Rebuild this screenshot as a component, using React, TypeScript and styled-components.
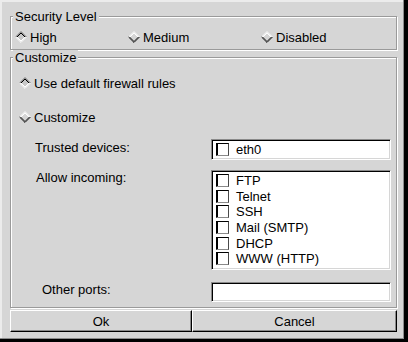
import React from "react";
import styled, { createGlobalStyle } from "styled-components";

const GlobalStyle = createGlobalStyle`
  html, body {
    margin: 0;
    padding: 0;
    background: #d6d6d6;
  }
  body {
    font-family: "Liberation Sans", Arial, sans-serif;
    font-size: 13px;
    color: #000;
  }
  * {
    box-sizing: border-box;
  }
`;

// GTK1 style diamond radio indicator
const Diamond: React.FC<{ checked?: boolean }> = ({ checked }) => {
  const outerTop = checked ? "#6a6a6a" : "#fff";
  const innerTop = checked ? "#000" : "#fff";
  const outerBottom = checked ? "#fff" : "#000";
  const innerBottom = checked ? "#fff" : "#7a7a7a";
  return (
    <svg width="12" height="12" viewBox="0 0 12 12">
      <polygon points="6,1 11,6 6,11 1,6" fill={checked ? "#c8c8c8" : "#d6d6d6"} />
      <polyline points="0.6,6 6,0.6 11.4,6" fill="none" stroke={outerTop} strokeWidth="1" />
      <polyline points="2,6 6,2 10,6" fill="none" stroke={innerTop} strokeWidth="1" />
      <polyline points="0.6,6 6,11.4 11.4,6" fill="none" stroke={outerBottom} strokeWidth="1" />
      <polyline points="2,6 6,10 10,6" fill="none" stroke={innerBottom} strokeWidth="1" />
    </svg>
  );
};

const Radio: React.FC<{ label: string; checked?: boolean }> = ({ label, checked }) => (
  <RadioRow>
    <Diamond checked={checked} />
    <span>{label}</span>
  </RadioRow>
);

const Check: React.FC<{ label: string }> = ({ label }) => (
  <CheckRow>
    <CheckBox />
    <span>{label}</span>
  </CheckRow>
);

const services = ["FTP", "Telnet", "SSH", "Mail (SMTP)", "DHCP", "WWW (HTTP)"];

export default function App() {
  return (
    <>
      <GlobalStyle />
      <Window>
        <Frame>
          <Legend>Security Level</Legend>
          <LevelRow>
            <Radio label="High" checked />
            <Radio label="Medium" />
            <Radio label="Disabled" />
          </LevelRow>
        </Frame>

        <Frame>
          <Legend>Customize</Legend>
          <CustomBody>
            <Radio label="Use default firewall rules" checked />
            <Spaced $top={18}>
              <Radio label="Customize" />
            </Spaced>
            <FormGrid>
              <FieldLabel $offset={1}>Trusted devices:</FieldLabel>
              <Sunken $height={21}>
                <Check label="eth0" />
              </Sunken>

              <FieldLabel $offset={0} $indent={1}>Allow incoming:</FieldLabel>
              <Sunken $height={100}>
                {services.map((s) => (
                  <Check key={s} label={s} />
                ))}
              </Sunken>

              <FieldLabel $offset={-1} $indent={7}>Other ports:</FieldLabel>
              <Sunken $height={20} />
            </FormGrid>
          </CustomBody>
        </Frame>

        <ButtonBar>
          <Button>Ok</Button>
          <Button>Cancel</Button>
        </ButtonBar>
      </Window>
    </>
  );
}

const Window = styled.div`
  width: 408px;
  height: 342px;
  padding: 9px 11px 0 10px;
  background: #d6d6d6;
  box-shadow: inset -4px -3px 0 #000, inset -5px -4px 0 #8c8c8c,
    inset 2px 2px 0 #ececec;
  display: flex;
  flex-direction: column;
`;

const Frame = styled.fieldset`
  margin: 0;
  padding: 0;
  min-width: 0;
  border: 1px solid #9a9a9a;
  box-shadow: inset 1px 1px 0 #fff, 1px 1px 0 #fff;
`;

const Legend = styled.legend`
  margin-left: 2px;
  padding: 0 2px;
  line-height: 15px;
  background: #d6d6d6;
`;

const LevelRow = styled.div`
  display: grid;
  grid-template-columns: 113px 133px auto;
  padding: 5px 0 4px 4px;
`;

const RadioRow = styled.div`
  display: flex;
  align-items: center;
  gap: 3px;
  height: 16px;
  line-height: 15px;
`;

const CustomBody = styled.div`
  display: flex;
  flex-direction: column;
  padding: 10px 5px 5px 8px;
`;

const Spaced = styled.div<{ $top: number }>`
  margin-top: ${(p) => p.$top}px;
`;

const FormGrid = styled.div`
  display: grid;
  grid-template-columns: 176px 180px;
  row-gap: 10px;
  margin: 14px 0 0 16px;

  & > :nth-child(5),
  & > :nth-child(6) {
    margin-top: 2px;
  }
`;

const FieldLabel = styled.div<{ $offset: number; $indent?: number }>`
  align-self: start;
  line-height: 15px;
  margin-top: ${(p) => p.$offset}px;
  margin-left: ${(p) => p.$indent ?? 0}px;
`;

const Sunken = styled.div<{ $height: number }>`
  height: ${(p) => p.$height}px;
  background: #fff;
  border: 1px solid;
  border-color: #8a8a8a #fff #fff #8a8a8a;
  box-shadow: inset 1px 1px 0 #000, inset -1px -1px 0 #d6d6d6;
  padding: 2px 0 0 4px;
  display: flex;
  flex-direction: column;
`;

const CheckRow = styled.div`
  display: flex;
  align-items: center;
  gap: 7px;
  height: 15.6px;
  line-height: 15px;
  flex-shrink: 0;
`;

const CheckBox = styled.span`
  width: 13px;
  height: 13px;
  flex-shrink: 0;
  background: #fff;
  border: 1px solid;
  border-color: #000 #4a4a4a #8a8a8a #000;
  box-shadow: inset 1px 0 0 #000;
`;

const ButtonBar = styled.div`
  display: grid;
  grid-template-columns: 182px 1fr;
  margin-top: 2px;
`;

const Button = styled.button`
  height: 22px;
  margin: 0;
  padding: 0;
  font: inherit;
  line-height: 15px;
  color: #000;
  background: #d6d6d6;
  border: 1px solid;
  border-color: #fff #000 #000 #fff;
  box-shadow: inset -1px -1px 0 #8a8a8a;
  border-radius: 0;
`;
